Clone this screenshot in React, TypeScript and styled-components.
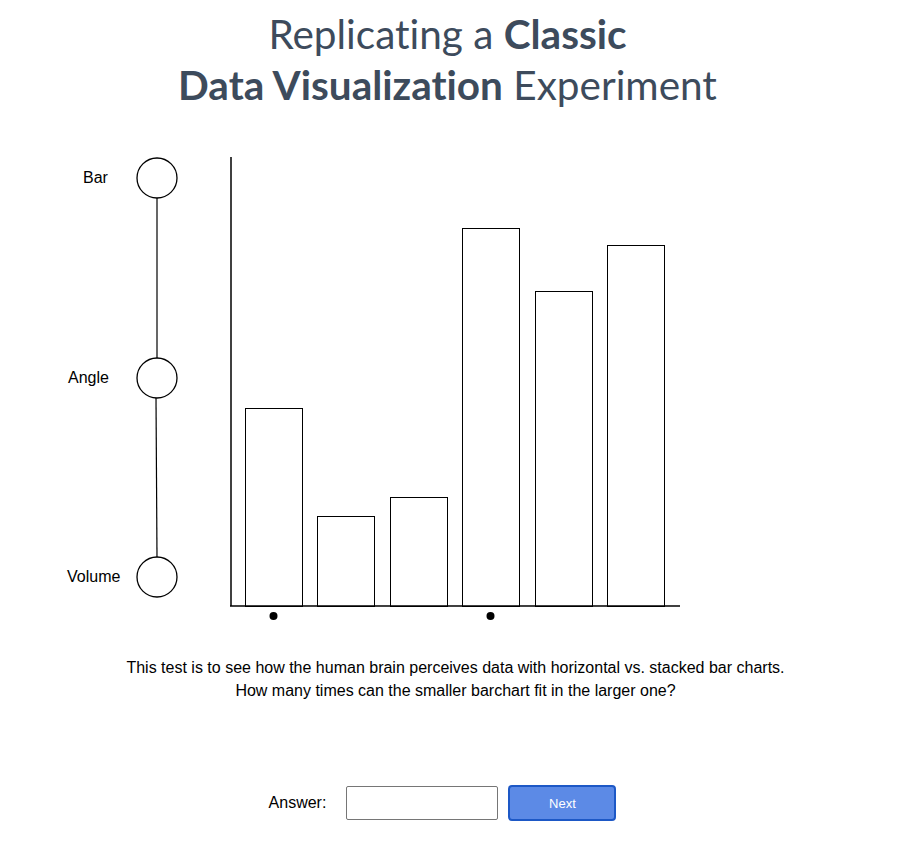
import React, { useState } from "react";
import styled, { createGlobalStyle } from "styled-components";

const GlobalStyle = createGlobalStyle`
    body {
        margin: 0;
        background: #ffffff;
        font-family: "Liberation Sans", Arial, sans-serif;
    }
`;

const Page = styled.div`
    width: 911px;
    display: flex;
    flex-direction: column;
    align-items: center;
`;

const Title = styled.h1`
    margin: 8px 16px 0 0;
    font-family: Lato, "Open Sans", sans-serif;
    font-weight: 400;
    font-size: 40.5px;
    line-height: 51px;
    color: #3d4b5c;
    text-align: center;
    font-variant-ligatures: none;
`;

const Strong = styled.span`
    font-weight: 700;
`;

const ChartRow = styled.div`
    align-self: stretch;
    display: flex;
    align-items: flex-start;
    margin-top: 40px;
    padding-left: 50px;
    gap: 20px;
`;

const Description = styled.p`
    margin: 26px 0 0 0;
    font-size: 16px;
    line-height: 23px;
    color: #000;
    text-align: center;
`;

const AnswerRow = styled.div`
    display: flex;
    align-items: center;
    margin-top: 83px;
    padding-right: 26px;
    gap: 10px;
`;

const AnswerLabel = styled.label`
    font-size: 16px;
    margin-right: 10px;
`;

const AnswerInput = styled.input`
    width: 152px;
    height: 34px;
    box-sizing: border-box;
    border: 1px solid #767676;
    border-radius: 2px;
    padding: 0 6px;
    font-size: 14px;
`;

const NextButton = styled.button`
    width: 108px;
    height: 36px;
    box-sizing: border-box;
    background: #5c8ae6;
    border: 2px solid #1d58c6;
    border-radius: 4px;
    color: #ffffff;
    font-family: "Liberation Sans", Arial, sans-serif;
    font-size: 13px;
`;

const levels = [
    { label: "Bar", x: 83, cy: 178 },
    { label: "Angle", x: 68, cy: 378 },
    { label: "Volume", x: 67, cy: 577 },
];

const bars = [
    { x: 245, top: 408 },
    { x: 317, top: 516 },
    { x: 390, top: 497 },
    { x: 462, top: 228 },
    { x: 535, top: 291 },
    { x: 607, top: 245 },
];

const OFFSET_X = 50;
const OFFSET_Y = 150;

function Slider() {
    return (
        <svg width={150} height={480} viewBox={`${OFFSET_X} ${OFFSET_Y} 150 480`}>
            <line x1={157} y1={198} x2={157} y2={358} stroke="#000" strokeWidth={1.2} />
            <line x1={156} y1={398} x2={157} y2={557} stroke="#000" strokeWidth={1.2} />
            {levels.map((l) => (
                <g key={l.label}>
                    <text x={l.x} y={l.cy + 5} fontSize={16} fontFamily="Liberation Sans, Arial, sans-serif">
                        {l.label}
                    </text>
                    <circle cx={157} cy={l.cy} r={20} fill="#fff" stroke="#000" strokeWidth={1.3} />
                </g>
            ))}
        </svg>
    );
}

function BarChart() {
    return (
        <svg width={480} height={480} viewBox={`220 ${OFFSET_Y} 480 480`}>
            {bars.map((b, i) => (
                <rect key={i} x={b.x + 0.5} y={b.top + 0.5} width={57} height={606 - b.top} fill="#fff" stroke="#000" strokeWidth={1} />
            ))}
            <line x1={231} y1={157} x2={231} y2={606} stroke="#000" strokeWidth={1.5} />
            <line x1={230} y1={606} x2={680} y2={606} stroke="#000" strokeWidth={1.5} />
            <circle cx={273.5} cy={616} r={4} fill="#000" />
            <circle cx={490.5} cy={616} r={4} fill="#000" />
        </svg>
    );
}

export default function App() {
    const [answer, answerSet] = useState<string>("");

    return (
        <>
            <GlobalStyle />
            <Page>
                <Title>
                    Replicating a <Strong>Classic</Strong>
                    <br />
                    <Strong>Data Visualization</Strong> Experiment
                </Title>
                <ChartRow>
                    <Slider />
                    <BarChart />
                </ChartRow>
                <Description>
                    This test is to see how the human brain perceives data with horizontal vs. stacked bar charts.
                    <br />
                    How many times can the smaller barchart fit in the larger one?
                </Description>
                <AnswerRow>
                    <AnswerLabel>Answer:</AnswerLabel>
                    <AnswerInput value={answer} onChange={(e) => answerSet(e.target.value)} />
                    <NextButton>Next</NextButton>
                </AnswerRow>
            </Page>
        </>
    );
}
